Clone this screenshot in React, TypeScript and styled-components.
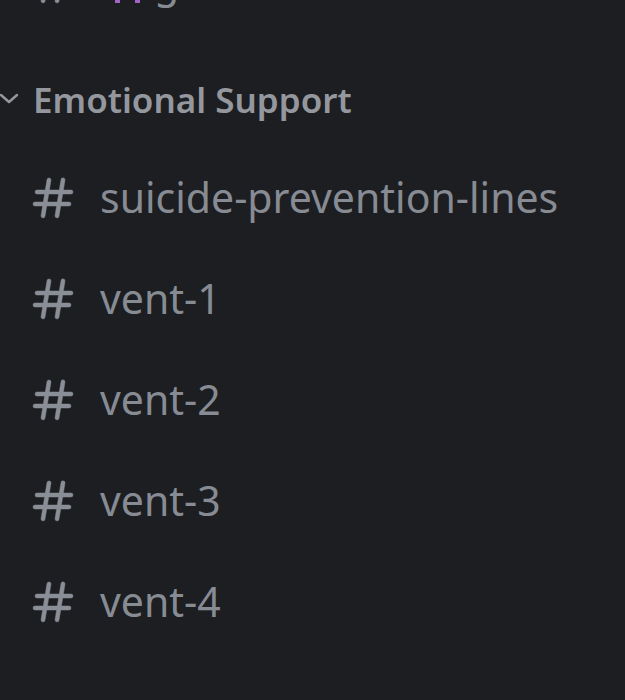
import React from "react";
import styled, { createGlobalStyle } from "styled-components";

const Global = createGlobalStyle`
  html, body { margin: 0; padding: 0; background: #1d1e21; }
  body { font-family: "Noto Sans", "Open Sans", sans-serif; overflow: hidden; }
`;

const Sidebar = styled.div`
  width: 625px;
  height: 700px;
  background: #1d1e21;
  overflow: hidden;
  display: flex;
  flex-direction: column;
`;

const ChannelRow = styled.div<{ $clipTop?: boolean }>`
  height: 101px;
  flex: 0 0 auto;
  display: flex;
  align-items: center;
  padding-left: 29px;
  gap: 23px;
  margin-top: ${(p) => (p.$clipTop ? "-68px" : "0")};
`;

const EmojiName = styled.span`
  display: flex;
  align-items: center;
  gap: 14px;
`;

const ChannelName = styled.span`
  font-size: 41px;
  color: #878b94;
  letter-spacing: 0;
  white-space: nowrap;
  line-height: 1;
`;

const CategoryRow = styled.div`
  height: 66px;
  flex: 0 0 auto;
  display: flex;
  align-items: center;
  gap: 13px;
`;

const CategoryName = styled.span`
  font-size: 35px;
  font-weight: 600;
  color: #94979e;
  white-space: nowrap;
  line-height: 1;
`;

const Spacer = styled.div<{ $h: number }>`
  height: ${(p) => p.$h}px;
  flex: 0 0 auto;
`;

const Hash = () => (
  <svg width="48" height="48" viewBox="0 0 24 24" fill="#8a8e97" stroke="#8a8e97" strokeWidth="0.25">
    <path
      fillRule="evenodd"
      d="M10.99 3.16A1 1 0 1 0 9 2.84L8.15 8H4a1 1 0 0 0 0 2h3.82l-.67 4H3a1 1 0 1 0 0 2h3.82l-.8 4.84a1 1 0 0 0 1.970.32L8.85 16h4.97l-.8 4.84a1 1 0 0 0 1.97.32l.86-5.16H20a1 1 0 1 0 0-2h-3.82l.67-4H21a1 1 0 1 0 0-2h-3.82l.8-4.84a1 1 0 1 0-1.97-.32L15.15 8h-4.97l.8-4.84ZM14.15 14l.67-4H9.850l-.67 4h4.97Z"
    />
  </svg>
);

const Chevron = () => (
  <svg width="20" height="20" viewBox="0 0 20 20" fill="none">
    <path d="M1 6l8 7 8-7" stroke="#94979e" strokeWidth="2.4" strokeLinecap="round" strokeLinejoin="round" />
  </svg>
);

const Invader = () => (
  <svg width="40" height="44" viewBox="0 0 40 44">
    <rect x="12" y="6" width="28" height="26" rx="4" fill="#a463c9" />
    <rect x="15" y="30" width="5" height="12" fill="#a463c9" />
    <rect x="35" y="30" width="5" height="12" fill="#a463c9" />
  </svg>
);

const channels = ["suicide-prevention-lines", "vent-1", "vent-2", "vent-3", "vent-4"];

export default function App() {
  return (
    <>
      <Global />
      <Sidebar>
        <ChannelRow $clipTop>
          <Hash />
          <EmojiName>
            <Invader />
            <ChannelName>general</ChannelName>
          </EmojiName>
        </ChannelRow>
        <Spacer $h={33} />
        <CategoryRow>
          <Chevron />
          <CategoryName>Emotional Support</CategoryName>
        </CategoryRow>
        <Spacer $h={15} />
        {channels.map((c) => (
          <ChannelRow key={c}>
            <Hash />
            <ChannelName>{c}</ChannelName>
          </ChannelRow>
        ))}
      </Sidebar>
    </>
  );
}
